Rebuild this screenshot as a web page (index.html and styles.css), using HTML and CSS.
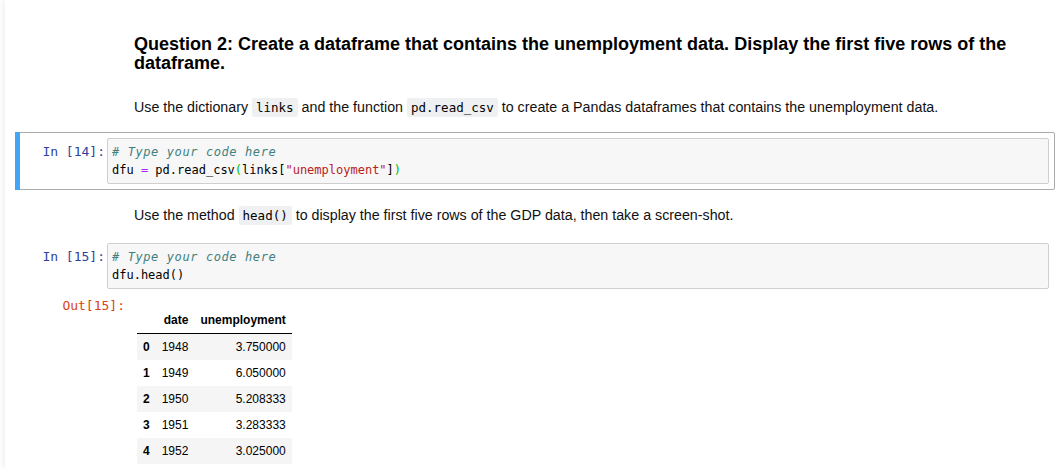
FILE: index.html
```html
<!DOCTYPE html>
<html>
<head>
<meta charset="utf-8">
<link rel="stylesheet" href="styles.css">
</head>
<body>
<div class="page">
  <div class="md md-first">
    <h3 class="heading">Question 2: Create a dataframe that contains the unemployment data. Display the first five rows of the dataframe.</h3>
    <p class="para">Use the dictionary <code class="ic">links</code> and the function <code class="ic">pd.read_csv</code> to create a Pandas dataframes that contains the unemployment data.</p>
  </div>

  <div class="cell selected">
    <div class="prompt in">In&nbsp;[14]:</div>
    <div class="input"><span class="cm-c"># Type your code here</span>
dfu <span class="cm-op">=</span> pd.read_csv<span class="cm-mb">(</span>links[<span class="cm-s">"unemployment"</span>]<span class="cm-mb">)</span></div>
  </div>

  <div class="md md-second">
    <p class="para">Use the method <code class="ic">head()</code> to display the first five rows of the GDP data, then take a screen-shot.</p>
  </div>

  <div class="cell cell2">
    <div class="inrow">
      <div class="prompt in">In&nbsp;[15]:</div>
      <div class="input"><span class="cm-c"># Type your code here</span>
dfu.head()</div>
    </div>
    <div class="outrow">
      <div class="prompt out">Out[15]:</div>
      <table class="df">
        <thead>
          <tr><th></th><th>date</th><th>unemployment</th></tr>
        </thead>
        <tbody>
          <tr><th>0</th><td>1948</td><td>3.750000</td></tr>
          <tr><th>1</th><td>1949</td><td>6.050000</td></tr>
          <tr><th>2</th><td>1950</td><td>5.208333</td></tr>
          <tr><th>3</th><td>1951</td><td>3.283333</td></tr>
          <tr><th>4</th><td>1952</td><td>3.025000</td></tr>
        </tbody>
      </table>
    </div>
  </div>
</div>
</body>
</html>
```

FILE: styles.css
```css
html, body {
  margin: 0;
  padding: 0;
  background: #ffffff;
}

body {
  font-family: "Liberation Sans", Arial, sans-serif;
  color: #000;
  width: 1062px;
  height: 468px;
  overflow: hidden;
}

.page {
  height: 468px;
  margin-left: 5px;
  box-shadow: -3px 0 4px rgba(0, 0, 0, 0.05);
  background: #fff;
}

.md {
  padding-left: 129px;
}

.md-first {
  padding-top: 35px;
}

.heading {
  margin: 0;
  font-size: 18px;
  line-height: 19px;
  font-weight: bold;
  width: 900px;
  color: #000;
}

.para {
  margin: 25px 0 0 0;
  font-size: 14.25px;
  line-height: 18px;
  color: #111;
}

.md-second .para {
  margin-top: 16px;
}

.ic {
  font-family: "DejaVu Sans Mono", "Liberation Mono", monospace;
  font-size: 12.5px;
  background: #eff0f1;
  padding: 2px 4px;
  border-radius: 2px;
  color: #000;
}

.cell {
  margin-left: 10px;
  width: 1040px;
  box-sizing: border-box;
  padding: 5px;
  border: 1px solid transparent;
  position: relative;
}

.cell.selected {
  margin-top: 15px;
  border-color: #ababab;
  border-radius: 2px;
  display: flex;
}

.cell.selected::before {
  content: "";
  position: absolute;
  left: -1px;
  top: -1px;
  width: 5px;
  height: calc(100% + 2px);
  background: #42a5f5;
}

.cell2 {
  margin-top: 12px;
}

.inrow {
  display: flex;
}

.prompt {
  font-family: "DejaVu Sans Mono", "Liberation Mono", monospace;
  font-size: 13px;
  line-height: 18px;
  text-align: right;
  box-sizing: border-box;
  flex: none;
}

.prompt.in {
  width: 86px;
  padding-top: 5px;
  padding-right: 2px;
  color: #303f9f;
}

.input {
  flex: 1;
  background: #f7f7f7;
  border: 1px solid #cfcfcf;
  border-radius: 2px;
  padding: 4px 4px;
  font-family: "DejaVu Sans Mono", "Liberation Mono", monospace;
  font-size: 12px;
  line-height: 18px;
  white-space: pre;
  color: #000;
}

.cm-c { color: #408080; font-style: italic; letter-spacing: 0.6px; }
.cm-op { color: #aa22ff; }
.cm-s { color: #ba2121; }
.cm-mb { color: #00bb00; }

.outrow {
  display: flex;
  align-items: flex-start;
}

.prompt.out {
  width: 104px;
  padding-top: 8px;
  padding-right: 0;
  color: #d84315;
}

.df {
  margin-top: 18px;
  margin-left: 12px;
  border-collapse: collapse;
  border-spacing: 0;
  font-size: 12px;
  color: #000;
}

.df th, .df td {
  padding: 6px 6px;
  line-height: 14px;
  text-align: right;
  vertical-align: middle;
}

.df thead th {
  font-weight: bold;
  border-bottom: 1px solid #000;
}

.df tbody th {
  font-weight: bold;
}

.df td {
  font-weight: normal;
}

.df tbody tr:nth-child(odd) {
  background: #f5f5f5;
}
```
